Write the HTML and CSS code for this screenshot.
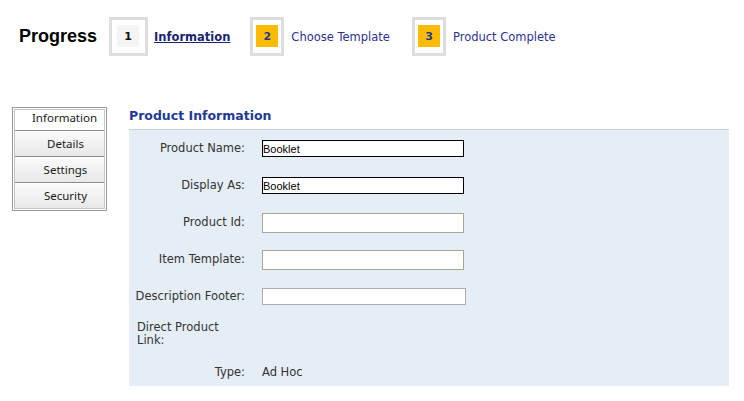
FILE: index.html
```html
<!DOCTYPE html>
<html lang="en">
<head>
    <meta charset="UTF-8">
    <title>Product Information</title>
    <link rel="stylesheet" href="styles.css">
</head>
<body>
    <div class="progress">
        <h1 class="progress-title">Progress</h1>
        <div class="step step-first"><span class="step-num">1</span></div>
        <a class="step-label step-current" href="#">Information</a>
        <div class="step"><span class="step-num step-todo">2</span></div>
        <span class="step-label">Choose Template</span>
        <div class="step"><span class="step-num step-todo">3</span></div>
        <span class="step-label">Product Complete</span>
    </div>

    <div class="main">
        <div class="side-nav">
            <ul class="nav-list">
                <li class="nav-item nav-active">Information</li>
                <li class="nav-item">Details</li>
                <li class="nav-item">Settings</li>
                <li class="nav-item">Security</li>
            </ul>
        </div>

        <div class="panel">
            <h2 class="panel-title">Product Information</h2>
            <div class="panel-body">
                <div class="form-row">
                    <label class="form-label">Product Name:</label>
                    <input class="field field-dark" type="text" value="Booklet">
                </div>
                <div class="form-row">
                    <label class="form-label">Display As:</label>
                    <input class="field field-dark" type="text" value="Booklet">
                </div>
                <div class="form-row">
                    <label class="form-label">Product Id:</label>
                    <input class="field field-olive" type="text">
                </div>
                <div class="form-row">
                    <label class="form-label">Item Template:</label>
                    <input class="field field-olive" type="text">
                </div>
                <div class="form-row">
                    <label class="form-label">Description Footer:</label>
                    <input class="field field-gray" type="text">
                </div>
                <div class="form-row">
                    <label class="form-label form-label-left">Direct Product Link:</label>
                </div>
                <div class="form-row form-row-last">
                    <label class="form-label">Type:</label>
                    <span class="form-value">Ad Hoc</span>
                </div>
            </div>
        </div>
    </div>
</body>
</html>
```

FILE: styles.css
```css
* {
    margin: 0;
    padding: 0;
    box-sizing: border-box;
}

body {
    background: #fff;
    font-family: "DejaVu Sans", Verdana, sans-serif;
    font-size: 11.5px;
    color: #333;
}

/* progress bar */
.progress {
    display: flex;
    align-items: center;
    padding: 17px 0 0 19px;
}

.progress-title {
    font-family: "Liberation Sans", Arial, sans-serif;
    font-size: 18px;
    font-weight: bold;
    color: #000;
    margin-right: 12px;
}

.step {
    border: 3px solid #ddd;
    padding: 5px 3px 6px 3px;
}

.step-first {
    padding-left: 5px;
    padding-right: 6px;
}

.step-num {
    display: flex;
    justify-content: center;
    align-items: center;
    width: 22px;
    height: 22px;
    background: #f4f4f4;
    font-size: 11px;
    font-weight: bold;
    color: #111;
}

.step-todo {
    background: #ffbb00;
    color: #1f3a93;
}

.step-label {
    color: #2e3192;
    margin: 0 22px 0 7px;
}

.step-current {
    font-weight: bold;
    color: #1a2470;
    text-decoration: underline;
    margin-left: 6px;
    margin-right: 20px;
}

/* main area */
.main {
    display: flex;
    align-items: flex-start;
    margin-top: 50px;
}

.side-nav {
    margin: 1px 0 0 12px;
    width: 95px;
    border: 1px solid #9a9a9a;
    padding: 1px;
    background: #fff;
}

.nav-list {
    list-style: none;
    border: 1px solid #c6c6c6;
}

.nav-item {
    display: flex;
    justify-content: center;
    align-items: center;
    height: 26px;
    padding-left: 12px;
    border-top: 1px solid #8c8c8c;
    background: linear-gradient(#fbfbfb, #e8e8e8);
    box-shadow: inset 0 1px #fff;
    font-family: "Noto Sans", sans-serif;
    font-size: 11.5px;
    color: #1a1a1a;
}

.nav-active {
    height: 20px;
    padding-left: 10px;
    padding-bottom: 6px;
    border-top: none;
    background: #fff;
    box-shadow: none;
}

.panel {
    margin-left: 22px;
    width: 600px;
}

.panel-title {
    font-size: 12.5px;
    font-weight: bold;
    color: #1f3a93;
    line-height: 16px;
    padding: 2px 0 5px;
}

.panel-body {
    background: #e5eef6;
    border-top: 1px solid #c9cdd2;
}

.form-row {
    display: flex;
    align-items: center;
    height: 37px;
}

.form-row-last {
    height: 34px;
    padding-top: 6px;
}

.form-label {
    width: 116px;
    padding-left: 2px;
    margin-right: 17px;
    text-align: right;
    white-space: nowrap;
    line-height: 13px;
}

.form-label-left {
    text-align: left;
    white-space: normal;
    padding-left: 8px;
    padding-right: 12px;
}

.field {
    width: 202px;
    height: 17px;
    padding: 0;
    border: 1px solid #000;
    background: #fff;
    font-family: "Liberation Sans", Arial, sans-serif;
    font-size: 11px;
    color: #000;
}

.field-olive {
    height: 20px;
    border-color: #a8a791;
}

.field-gray {
    width: 204px;
    border-color: #abadb3;
}
```
